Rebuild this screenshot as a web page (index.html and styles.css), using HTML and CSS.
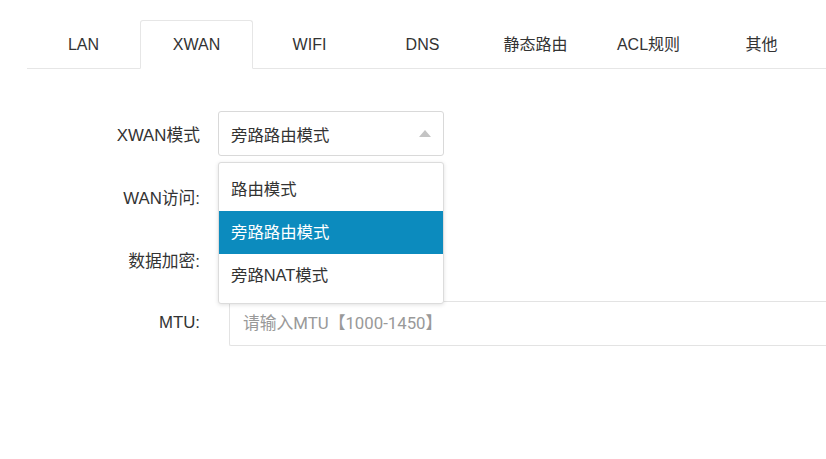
FILE: index.html
```html
<!DOCTYPE html>
<html lang="zh-CN">
<head>
  <meta charset="UTF-8" />
  <title>XWAN</title>
  <link rel="stylesheet" href="styles.css">
</head>
<body>
  <div class="tabs">
    <div class="tab">LAN</div>
    <div class="tab active">XWAN</div>
    <div class="tab">WIFI</div>
    <div class="tab">DNS</div>
    <div class="tab">静态路由</div>
    <div class="tab">ACL规则</div>
    <div class="tab">其他</div>
  </div>

  <div class="form">
    <div class="row">
      <label>XWAN模式</label>
      <div class="select-wrap">
        <div class="select">
          <span>旁路路由模式</span>
          <span class="arrow"></span>
        </div>
        <ul class="dropdown">
          <li>路由模式</li>
          <li class="selected">旁路路由模式</li>
          <li>旁路NAT模式</li>
        </ul>
      </div>
    </div>

    <div class="row">
      <label>WAN访问:</label>
    </div>

    <div class="row">
      <label>数据加密:</label>
    </div>

    <div class="row">
      <label>MTU:</label>
      <input class="input mtu" type="text" placeholder="请输入MTU【1000-1450】">
    </div>
  </div>
</body>
</html>
```

FILE: styles.css
```css
* {
  box-sizing: border-box;
}

body {
  margin: 0;
  background: #fff;
  color: #333;
  font-family: "Liberation Sans", Arial, "Noto Sans CJK SC", sans-serif;
  font-size: 16px;
  overflow: hidden;
}

.tabs {
  display: flex;
  margin-top: 20px;
  margin-left: 27px;
  border-bottom: 1px solid #e6e6e6;
}

.tab {
  width: 113px;
  height: 49px;
  line-height: 47px;
  text-align: center;
  color: #333;
  border: 1px solid transparent;
  margin-bottom: -1px;
}

.tab.active {
  border-color: #e6e6e6;
  border-bottom-color: #fff;
  border-radius: 3px 3px 0 0;
  background: #fff;
}

.form {
  margin-top: 42px;
  font-size: 16.4px;
}

.row {
  display: flex;
  align-items: center;
  height: 45px;
  margin-bottom: 18.3px;
}

.row label {
  flex-shrink: 0;
  width: 200px;
  text-align: right;
  color: #333;
  font-size: 16.8px;
}

.select-wrap {
  position: relative;
  margin-left: 18px;
}

.select {
  width: 226px;
  height: 45px;
  border: 1px solid #d9d9d9;
  border-radius: 3px;
  display: flex;
  align-items: center;
  justify-content: space-between;
  padding: 0 12px 0 12px;
  color: #333;
}

.arrow {
  width: 0;
  height: 0;
  border-left: 6px solid transparent;
  border-right: 6px solid transparent;
  border-bottom: 7px solid #c4c4c4;
  margin-top: -1px;
}

.dropdown {
  position: absolute;
  top: 51px;
  left: 0;
  width: 226px;
  margin: 0;
  padding: 5px 0 6px;
  list-style: none;
  background: #fff;
  border: 1px solid #dcdcdc;
  border-radius: 3px;
  box-shadow: 0 1px 4px rgba(0, 0, 0, 0.12);
  z-index: 10;
}

.dropdown li {
  height: 43px;
  line-height: 43px;
  padding-left: 12px;
  color: #333;
}

.dropdown li.selected {
  background: #0c8bbe;
  color: #fff;
}

.input {
  height: 45px;
  border: 1px solid #e3e3e3;
  border-right: 0;
  border-radius: 2px 0 0 2px;
  padding: 0 13px;
  font-family: Roboto, "Noto Sans CJK SC", sans-serif;
  font-size: 16.8px;
  color: #333;
  outline: none;
}

.input::placeholder {
  color: #999;
}

.mtu {
  flex: 1;
  min-width: 0;
  margin-left: 29px;
}
```
